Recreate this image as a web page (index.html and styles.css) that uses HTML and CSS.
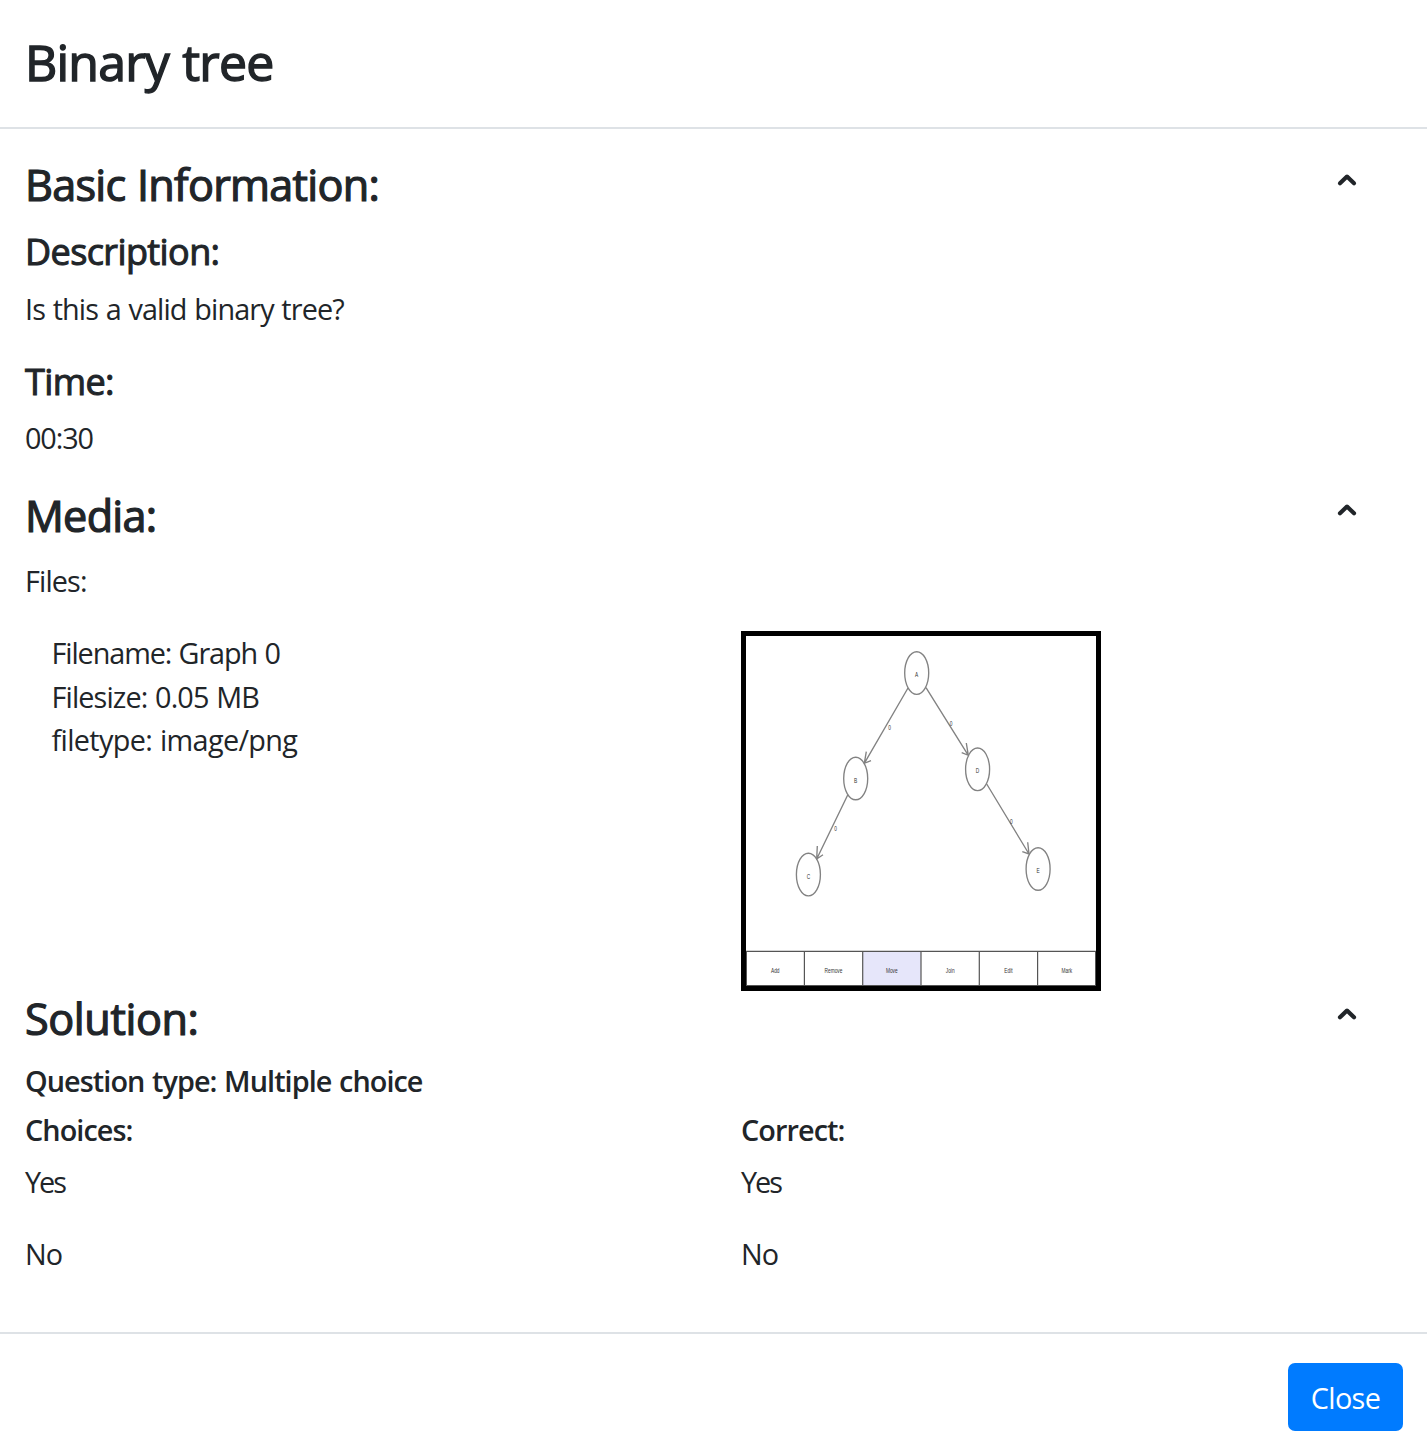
FILE: index.html
```html
<!DOCTYPE html>
<html lang="en">
<head>
<meta charset="utf-8">
<title>Binary tree</title>
<link rel="stylesheet" href="styles.css">
</head>
<body>
<div class="modal">
  <header class="modal-header"><h3 class="modal-title">Binary tree</h3></header>
  <main class="modal-body">
    <section class="basic">
      <div class="section-head">
        <h4 class="section-title">Basic Information:</h4>
        <svg class="chevron" viewBox="0 0 20 14"><path d="M3 10.3 10 3.6l7 6.7"/></svg>
      </div>
      <h5 class="label">Description:</h5>
      <p class="text">Is this a valid binary tree?</p>
      <h5 class="label">Time:</h5>
      <p class="text tight">00:30</p>
    </section>
    <section>
      <div class="section-head">
        <h4 class="section-title">Media:</h4>
        <svg class="chevron" viewBox="0 0 20 14"><path d="M3 10.3 10 3.6l7 6.7"/></svg>
      </div>
      <p class="text">Files:</p>
      <div class="columns">
        <div class="file-info">
          <div class="tight">Filename: Graph 0</div>
          <div>Filesize: 0.05 MB</div>
          <div class="loose">filetype: image/png</div>
        </div>
        <svg class="graph" viewBox="0 0 350 350">
          <g class="lines">
            <ellipse cx="170.7" cy="37" rx="12" ry="21.3"/>
            <ellipse cx="109.7" cy="142.5" rx="12" ry="21.3"/>
            <ellipse cx="231.6" cy="133.3" rx="12" ry="21.3"/>
            <ellipse cx="62.4" cy="238.5" rx="12" ry="21.3"/>
            <ellipse cx="292.1" cy="233" rx="12" ry="21.3"/>
            <path d="M162 52 118.3 127.3M120.3 115.7l-2 11.6 6.7-2.6"/>
            <path d="M180 51.7l42.3 67.6M220.3 107l2 12.3-6.6-2.6"/>
            <path d="M101.7 159l-31 64M71.3 210l-.6 13 6.3-4.3"/>
            <path d="M240.7 148l42.3 70M281.7 206.3l1.3 11.7-6.7-2.3"/>
          </g>
          <g class="graph-text">
            <text transform="translate(170.7 41) scale(.6 1)">A</text>
            <text transform="translate(109.7 146.5) scale(.6 1)">B</text>
            <text transform="translate(231.6 137.3) scale(.6 1)">D</text>
            <text transform="translate(62.4 242.5) scale(.6 1)">C</text>
            <text transform="translate(292.1 237.3) scale(.6 1)">E</text>
            <text transform="translate(143.7 93.7) scale(.6 1)">0</text>
            <text transform="translate(205 89.7) scale(.6 1)">0</text>
            <text transform="translate(89.7 195) scale(.6 1)">0</text>
            <text transform="translate(265.3 187.7) scale(.6 1)">0</text>
          </g>
          <rect class="active" x="116.7" y="315.3" width="58.3" height="34.2"/>
          <path class="toolbar" d="M.4 315.3H349.6V349.6H.4ZM58.4 315.3v34M116.7 315.3v34M175 315.3v34M233.3 315.3v34M291.6 315.3v34"/>
          <g class="graph-text">
            <text transform="translate(29.2 336.8) scale(.6 1)">Add</text>
            <text transform="translate(87.5 336.8) scale(.6 1)">Remove</text>
            <text transform="translate(145.8 336.8) scale(.6 1)">Move</text>
            <text transform="translate(204.2 336.8) scale(.6 1)">Join</text>
            <text transform="translate(262.5 336.8) scale(.6 1)">Edit</text>
            <text transform="translate(320.8 336.8) scale(.6 1)">Mark</text>
          </g>
        </svg>
      </div>
    </section>
    <section>
      <div class="section-head">
        <h4 class="section-title wide">Solution:</h4>
        <svg class="chevron" viewBox="0 0 20 14"><path d="M3 10.3 10 3.6l7 6.7"/></svg>
      </div>
      <h6 class="sublabel">Question type: Multiple choice</h6>
      <div class="columns">
        <div>
          <h6 class="sublabel">Choices:</h6>
          <p class="text answer">Yes</p>
          <p class="text">No</p>
        </div>
        <div>
          <h6 class="sublabel">Correct:</h6>
          <p class="text answer">Yes</p>
          <p class="text">No</p>
        </div>
      </div>
    </section>
  </main>
  <footer class="modal-footer"><button class="close-button" type="button">Close</button></footer>
</div>
</body>
</html>
```
FILE: styles.css
```css
* { box-sizing: border-box; }
body {
  margin: 0;
  background: #fff;
  color: #212529;
  font: 400 28.8px/43.2px "Open Sans", "Noto Sans", sans-serif;
  letter-spacing: -0.87px;
  word-spacing: 1px;
}
h3, h4, h5, h6, p { margin: 0; }
.modal { display: flex; flex-direction: column; height: 1451px; }
.modal-header { height: 129px; padding: 25px 25px 0; border-bottom: 2px solid #dee2e6; }
.modal-title, .section-title, .label { font-weight: 400; -webkit-text-stroke: 0.028em #212529; }
.modal-title { font-size: 50px; line-height: 75.6px; letter-spacing: -0.8px; }
.modal-body { height: 1203px; padding: 28px 25px 0; }
.section-head { display: flex; justify-content: space-between; height: 71.6px; padding-right: 45px; }
.section-title { padding-top: 2px; font-size: 43.2px; line-height: 51.84px; letter-spacing: -0.72px; }
.section-title.wide { letter-spacing: -0.4px; }
.chevron { width: 20px; height: 14px; margin-top: 15.5px; }
.chevron path { fill: none; stroke: #212529; stroke-width: 4.2; stroke-linecap: round; stroke-linejoin: round; }
.label { margin-bottom: 13.4px; padding-top: 1.5px; font-size: 36px; line-height: 43.2px; letter-spacing: -0.6px; }
.text { margin-bottom: 28.8px; }
.basic .text { margin-bottom: 28.3px; }
.tight { letter-spacing: -1.1px; }
.loose { letter-spacing: -0.65px; }
.answer { letter-spacing: -2px; }
.sublabel { margin-bottom: 12.4px; padding-top: 1.5px; font-size: 28.8px; line-height: 34.56px; font-weight: 600; letter-spacing: -0.93px; }
.columns { display: grid; grid-template-columns: 716px 1fr; }
.file-info { padding-left: 26.5px; }
.graph { display: block; width: 360px; height: 360px; border: 5px solid #000; }
.lines { fill: none; stroke: #828282; stroke-width: 1.35; }
.graph-text { fill: #333; font: 8px "Liberation Sans", sans-serif; letter-spacing: 0; word-spacing: 0; text-anchor: middle; }
.active { fill: #e6e6fa; }
.toolbar { fill: none; stroke: #555; stroke-width: 1.2; }
.modal-footer { display: flex; justify-content: flex-end; flex: 1; padding: 29px 24px 0 0; border-top: 2px solid #dee2e6; }
.close-button {
  width: 115px;
  height: 68px;
  padding: 1px 0 0;
  border: 0;
  border-radius: 7px;
  background: #007bff;
  color: #fff;
  font: inherit;
  letter-spacing: -0.6px;
}
```
